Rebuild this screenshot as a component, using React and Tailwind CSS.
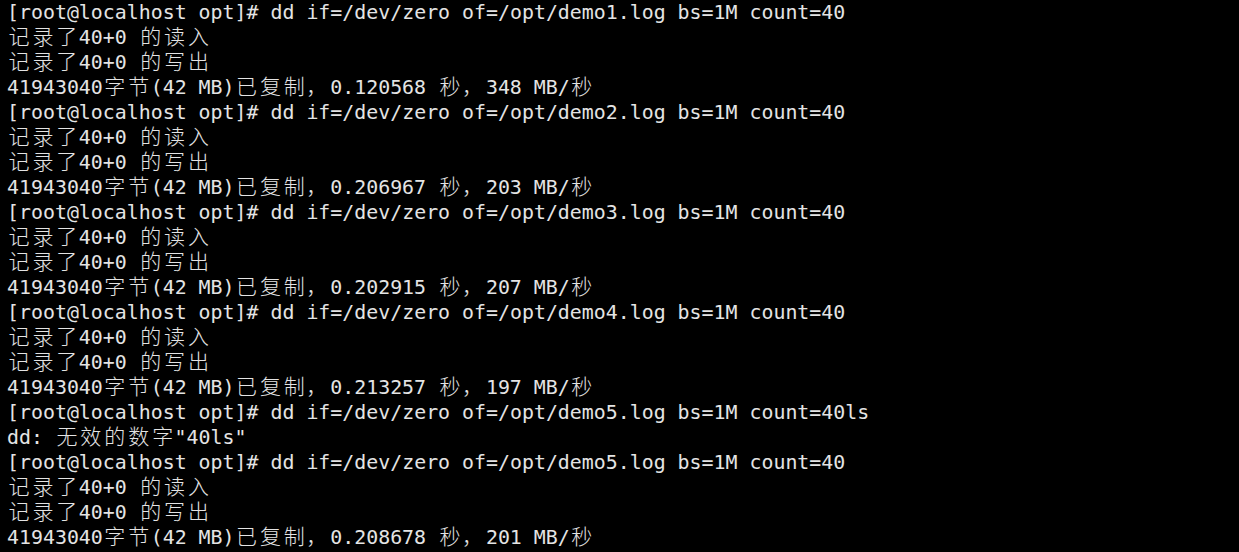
// Terminal session: repeated dd writes to /opt, rendered on a fixed char grid.
const PROMPT = '[root@localhost opt]# ';

const LINES = [
  PROMPT + 'dd if=/dev/zero of=/opt/demo1.log bs=1M count=40',
  '记录了40+0 的读入',
  '记录了40+0 的写出',
  '41943040字节(42 MB)已复制，0.120568 秒，348 MB/秒',
  PROMPT + 'dd if=/dev/zero of=/opt/demo2.log bs=1M count=40',
  '记录了40+0 的读入',
  '记录了40+0 的写出',
  '41943040字节(42 MB)已复制，0.206967 秒，203 MB/秒',
  PROMPT + 'dd if=/dev/zero of=/opt/demo3.log bs=1M count=40',
  '记录了40+0 的读入',
  '记录了40+0 的写出',
  '41943040字节(42 MB)已复制，0.202915 秒，207 MB/秒',
  PROMPT + 'dd if=/dev/zero of=/opt/demo4.log bs=1M count=40',
  '记录了40+0 的读入',
  '记录了40+0 的写出',
  '41943040字节(42 MB)已复制，0.213257 秒，197 MB/秒',
  PROMPT + 'dd if=/dev/zero of=/opt/demo5.log bs=1M count=40ls',
  'dd: 无效的数字"40ls"',
  PROMPT + 'dd if=/dev/zero of=/opt/demo5.log bs=1M count=40',
  '记录了40+0 的读入',
  '记录了40+0 的写出',
  '41943040字节(42 MB)已复制，0.208678 秒，201 MB/秒',
];

// wide (CJK / full-width) glyphs take two terminal columns
function Line({ text }) {
  const parts = [];
  let buf = '';
  [...text].forEach((ch, i) => {
    if (ch.charCodeAt(0) > 0x2e80) {
      if (buf) parts.push(buf);
      buf = '';
      const isPunct = ch === '，';
      parts.push(
        <span
          key={i}
          className={`inline-block w-[2ch] ${isPunct ? 'text-left' : 'text-center'}`}
        >
          <span className="text-[21px] font-light">{ch}</span>
        </span>
      );
    } else {
      buf += ch;
    }
  });
  if (buf) parts.push(buf);
  return <div className="h-[25px] whitespace-pre">{parts}</div>;
}

export default function App() {
  return (
    <div className="w-[1239px] h-[552px] overflow-hidden bg-black pl-[7px] text-[#e4e4e4] text-[19.9px] leading-[25px] font-['DejaVu_Sans_Mono','Noto_Sans_CJK_SC',monospace]">
      {LINES.map((l, i) => (
        <Line key={i} text={l} />
      ))}
    </div>
  );
}
